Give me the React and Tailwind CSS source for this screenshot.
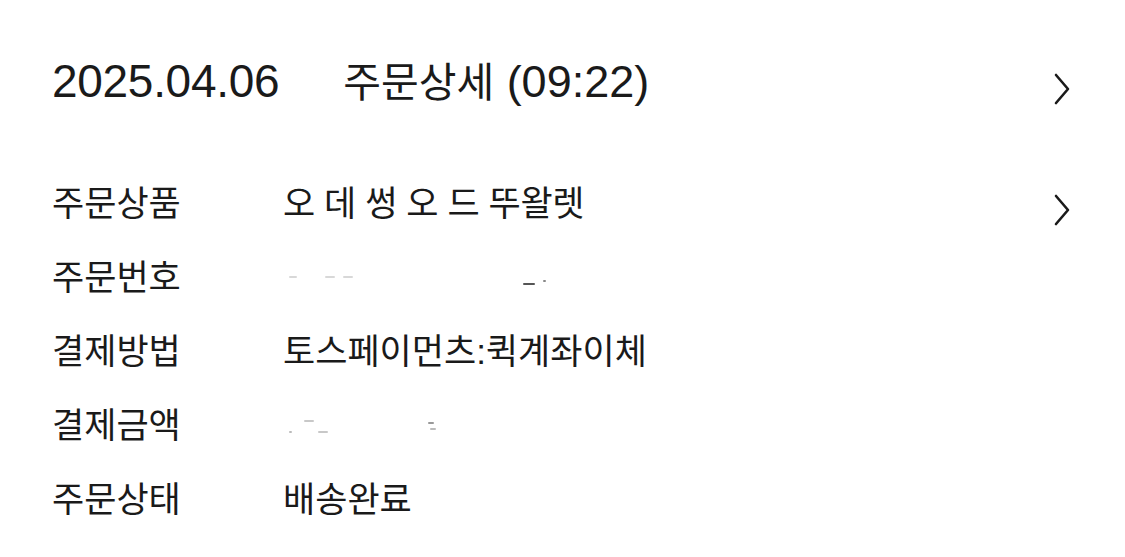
import React from "react";

const Chevron = () => (
  <svg width="18" height="34" viewBox="0 0 18 34" fill="none" className="text-[#1a1a1a]">
    <path d="M3 3 L15 17 L3 31" stroke="currentColor" strokeWidth="2.6" strokeLinecap="round" strokeLinejoin="round" />
  </svg>
);

const Row = ({ label, children, chevron }) => (
  <div className="flex h-[74px] items-center">
    <div className="w-[231px] shrink-0 text-[35px] leading-none">{label}</div>
    <div className="flex-1 text-[35px] leading-none">{children}</div>
    {chevron && (
      <div className="mt-[14px] flex w-[20px] justify-end">
        <Chevron />
      </div>
    )}
  </div>
);

const Mark = ({ className }) => <span className={"inline-block h-[2px] rounded-full " + className} />;

export default function App() {
  return (
    <div
      className="h-[557px] w-[1125px] overflow-hidden bg-white pl-[52px] pr-[54px] text-[#1a1a1a]"
      style={{ fontFamily: '"Liberation Sans", "Noto Sans CJK KR", sans-serif' }}
    >
      <div className="flex h-[166px] items-start pt-[58px]">
        <div className="flex flex-1 items-center">
          <span className="text-[46px] leading-none tracking-[-0.3px]">2025.04.06</span>
          <span className="ml-[64px] text-[45px] leading-none">
            <span className="text-[41px]">주문상세</span> (09:22)
          </span>
        </div>
        <div className="mt-[14px] flex w-[20px] justify-end">
          <Chevron />
        </div>
      </div>
      <div className="flex flex-col">
        <Row label="주문상품" chevron>
          <span className="tracking-[-0.4px]">오&nbsp;데&nbsp;썽&nbsp;오&nbsp;드&nbsp;뚜왈렛</span>
        </Row>
        <Row label="주문번호">
          <div className="flex h-[30px] items-center">
            <Mark className="ml-[6px] w-[8px] bg-[#d8d8d8]" />
            <Mark className="ml-[28px] w-[10px] bg-[#d8d8d8]" />
            <Mark className="ml-[8px] w-[10px] bg-[#d8d8d8]" />
            <Mark className="ml-[170px] mt-[14px] w-[12px] bg-[#555]" />
            <Mark className="ml-[8px] mt-[8px] w-[3px] bg-[#888]" />
          </div>
        </Row>
        <Row label="결제방법">토스페이먼츠:퀵계좌이체</Row>
        <Row label="결제금액">
          <div className="flex h-[30px] items-center">
            <Mark className="ml-[6px] mt-[14px] w-[3px] bg-[#bbb]" />
            <Mark className="ml-[12px] mt-[-8px] w-[10px] bg-[#c8c8c8]" />
            <Mark className="ml-[4px] mt-[14px] w-[10px] bg-[#c8c8c8]" />
            <Mark className="ml-[100px] mt-[-4px] w-[6px] bg-[#999]" />
            <Mark className="ml-[-4px] mt-[8px] w-[6px] bg-[#bbb]" />
          </div>
        </Row>
        <Row label="주문상태">배송완료</Row>
      </div>
    </div>
  );
}
